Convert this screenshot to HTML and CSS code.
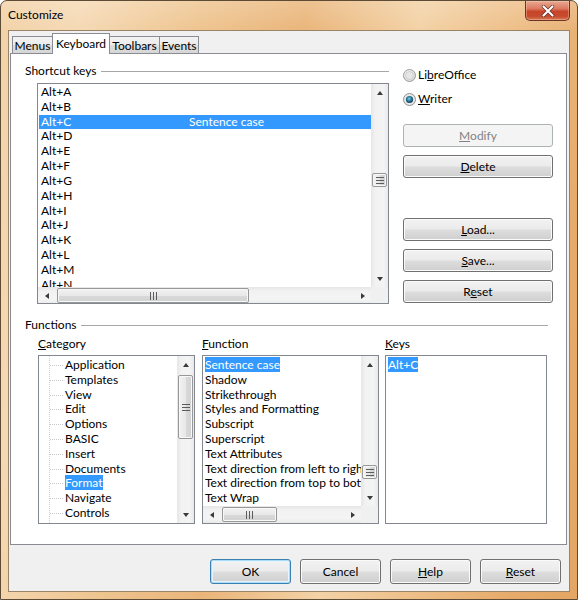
FILE: index.html
```html
<!DOCTYPE html>
<html>
<head>
<meta charset="utf-8">
<title>Customize</title>
<link rel="stylesheet" href="styles.css">
</head>
<body>
<div class="window">
  <div class="titlebar">
    <span class="title">Customize</span>
    <div class="close-btn">
      <svg width="14" height="12" viewBox="0 0 14 12"><path d="M2.5 1.5 L11.5 10.5 M11.5 1.5 L2.5 10.5" stroke="#5a2a20" stroke-width="3.4" stroke-linecap="round"/><path d="M2.5 1.5 L11.5 10.5 M11.5 1.5 L2.5 10.5" stroke="#fff" stroke-width="2.2" stroke-linecap="round"/></svg>
    </div>
  </div>
  <div class="client">
    <div class="tabs">
      <div class="tab tab-menus">Menus</div>
      <div class="tab tab-keyboard active">Keyboard</div>
      <div class="tab tab-toolbars">Toolbars</div>
      <div class="tab tab-events">Events</div>
    </div>
    <div class="panel">
      <div class="top-section">
        <div class="shortcut-col">
          <div class="group-title short"><span>Shortcut keys</span><div class="rule"></div></div>
          <div class="listbox shortcuts">
            <div class="rows">
              <div class="row"><span class="key">Alt+A</span></div>
              <div class="row"><span class="key">Alt+B</span></div>
              <div class="row selected"><span class="key">Alt+C</span><span class="cmd">Sentence case</span></div>
              <div class="row"><span class="key">Alt+D</span></div>
              <div class="row"><span class="key">Alt+E</span></div>
              <div class="row"><span class="key">Alt+F</span></div>
              <div class="row"><span class="key">Alt+G</span></div>
              <div class="row"><span class="key">Alt+H</span></div>
              <div class="row"><span class="key">Alt+I</span></div>
              <div class="row"><span class="key">Alt+J</span></div>
              <div class="row"><span class="key">Alt+K</span></div>
              <div class="row"><span class="key">Alt+L</span></div>
              <div class="row"><span class="key">Alt+M</span></div>
              <div class="row"><span class="key">Alt+N</span></div>
            </div>
            <div class="vscroll">
              <div class="arrow-box"><span class="tri up"></span></div>
              <div class="track v"><div class="thumb v thumb-short"><svg width="8" height="7" viewBox="0 0 8 7"><path d="M0 0.5H8M0 3.5H8M0 6.5H8" stroke="#5c5c5c" stroke-width="1"/></svg></div></div>
              <div class="arrow-box"><span class="tri down"></span></div>
            </div>
            <div class="hscroll">
              <div class="arrow-box"><span class="tri left"></span></div>
              <div class="track h"><div class="thumb h hthumb-short"><svg width="7" height="8" viewBox="0 0 7 8"><path d="M0.5 0V8M3.5 0V8M6.5 0V8" stroke="#5c5c5c" stroke-width="1"/></svg></div></div>
              <div class="arrow-box"><span class="tri right"></span></div>
            </div>
            <div class="corner"></div>
          </div>
        </div>
        <div class="side-col">
          <div class="radio-row first">
            <svg class="radio" width="13" height="13" viewBox="0 0 13 13"><defs><radialGradient id="rg1" cx="0.4" cy="0.35" r="0.7"><stop offset="0" stop-color="#ffffff"/><stop offset="1" stop-color="#d8d8d8"/></radialGradient></defs><circle cx="6.5" cy="6.5" r="6" fill="url(#rg1)" stroke="#9a9a9a"/><circle cx="6.5" cy="6.5" r="4" fill="#e6e6e6" stroke="#c4c4c4" stroke-width="0.8"/></svg>
            <span>Li<u>b</u>reOffice</span>
          </div>
          <div class="radio-row second">
            <svg class="radio" width="13" height="13" viewBox="0 0 13 13"><defs><radialGradient id="rg2" cx="0.45" cy="0.4" r="0.6"><stop offset="0" stop-color="#7fd0ea"/><stop offset="0.6" stop-color="#1f6c8c"/><stop offset="1" stop-color="#153f55"/></radialGradient></defs><circle cx="6.5" cy="6.5" r="6" fill="#e8e8e8" stroke="#8e8f8f"/><circle cx="6.5" cy="6.5" r="3.6" fill="url(#rg2)"/></svg>
            <span><u>W</u>riter</span>
          </div>
          <div class="btn side disabled modify"><span><u>M</u>odify</span></div>
          <div class="btn side delete"><span><u>D</u>elete</span></div>
          <div class="btn side load"><span><u>L</u>oad...</span></div>
          <div class="btn side save"><span><u>S</u>ave...</span></div>
          <div class="btn side reset"><span>R<u>e</u>set</span></div>
        </div>
      </div>

      <div class="functions">
        <div class="group-title func"><span>Functions</span><div class="rule"></div></div>
        <div class="func-grid">
          <div class="col col-cat">
            <div class="col-label"><u>C</u>ategory</div>
            <div class="listbox category">
              <div class="rows tree">
                <div class="trow">Application</div>
                <div class="trow">Templates</div>
                <div class="trow">View</div>
                <div class="trow">Edit</div>
                <div class="trow">Options</div>
                <div class="trow">BASIC</div>
                <div class="trow">Insert</div>
                <div class="trow">Documents</div>
                <div class="trow"><span class="sel">Format</span></div>
                <div class="trow">Navigate</div>
                <div class="trow">Controls</div>
              </div>
              <div class="vscroll">
                <div class="arrow-box"><span class="tri up"></span></div>
                <div class="track v"><div class="thumb v thumb-cat"><svg width="8" height="7" viewBox="0 0 8 7"><path d="M0 0.5H8M0 3.5H8M0 6.5H8" stroke="#5c5c5c" stroke-width="1"/></svg></div></div>
                <div class="arrow-box"><span class="tri down"></span></div>
              </div>
            </div>
          </div>
          <div class="col col-func">
            <div class="col-label"><u>F</u>unction</div>
            <div class="listbox function">
              <div class="rows flist">
                <div class="frow"><span class="sel">Sentence case</span></div>
                <div class="frow">Shadow</div>
                <div class="frow">Strikethrough</div>
                <div class="frow">Styles and Formatting</div>
                <div class="frow">Subscript</div>
                <div class="frow">Superscript</div>
                <div class="frow">Text Attributes</div>
                <div class="frow">Text direction from left to right</div>
                <div class="frow">Text direction from top to bottom</div>
                <div class="frow">Text Wrap</div>
              </div>
              <div class="vscroll">
                <div class="arrow-box"><span class="tri up"></span></div>
                <div class="track v"><div class="thumb v thumb-func"><svg width="8" height="7" viewBox="0 0 8 7"><path d="M0 0.5H8M0 3.5H8M0 6.5H8" stroke="#5c5c5c" stroke-width="1"/></svg></div></div>
                <div class="arrow-box"><span class="tri down"></span></div>
              </div>
              <div class="hscroll">
                <div class="arrow-box"><span class="tri left"></span></div>
                <div class="track h"><div class="thumb h hthumb-func"><svg width="7" height="8" viewBox="0 0 7 8"><path d="M0.5 0V8M3.5 0V8M6.5 0V8" stroke="#5c5c5c" stroke-width="1"/></svg></div></div>
                <div class="arrow-box"><span class="tri right"></span></div>
              </div>
              <div class="corner"></div>
            </div>
          </div>
          <div class="col col-keys">
            <div class="col-label"><u>K</u>eys</div>
            <div class="listbox keys">
              <div class="rows klist">
                <div class="frow"><span class="sel">Alt+C</span></div>
              </div>
            </div>
          </div>
        </div>
      </div>
    </div>
    <div class="dialog-buttons">
      <div class="btn dlg default"><span>OK</span></div>
      <div class="btn dlg"><span>Cancel</span></div>
      <div class="btn dlg"><span><u>H</u>elp</span></div>
      <div class="btn dlg"><span><u>R</u>eset</span></div>
    </div>
  </div>
</div>
</body>
</html>
```

FILE: styles.css
```css
* { box-sizing: border-box; }
html, body { margin: 0; padding: 0; }
body {
  width: 578px;
  height: 600px;
  overflow: hidden;
  background: #ffffff;
  font-family: Lato, "Open Sans", sans-serif;
  font-size: 12px;
  color: #000;
}
u { text-decoration: underline; text-underline-offset: 1px; }

.window {
  width: 578px;
  height: 600px;
  display: flex;
  flex-direction: column;
  padding: 0 7px 7px 7px;
  border: 1px solid #5e4b36;
  border-radius: 7px 7px 0 0;
  background:
    linear-gradient(180deg, rgba(255,255,255,0.18) 0px, rgba(255,255,255,0) 30px),
    linear-gradient(100deg, #f2d2a8 0%, #f5d9b4 12%, #eec48f 30%, #eab57a 45%, #f3d2a6 62%, #eec08a 75%, #e6ab6b 90%, #e3a664 100%);
}

.titlebar {
  height: 29px;
  display: flex;
  justify-content: space-between;
  align-items: flex-start;
}
.title {
  margin-top: 6px;
  line-height: 16px;
  color: #000;
}
.close-btn {
  width: 45px;
  height: 20px;
  display: flex;
  align-items: center;
  justify-content: center;
  border: 1px solid #6b3426;
  border-top: none;
  border-radius: 0 0 5px 5px;
  background: linear-gradient(180deg, #e9a995 0%, #dc7a60 40%, #c8452b 55%, #c64a2e 80%, #d77a55 100%);
  box-shadow: inset 0 0 0 1px rgba(255,220,200,0.35);
}

.client {
  flex: 1;
  display: flex;
  flex-direction: column;
  border: 1px solid #9a8468;
  background: #f0f0f0;
  padding: 1px 2px 0 1px;
}

/* tabs */
.tabs {
  height: 21px;
  display: flex;
  align-items: flex-end;
  padding-left: 2px;
}
.tab {
  height: 17px;
  display: flex;
  align-items: center;
  justify-content: center;
  border: 1px solid #898c95;
  border-bottom: none;
  border-right: none;
  background: linear-gradient(180deg, #f3f3f3 0%, #ebebeb 50%, #dedede 50%, #d6d6d6 100%);
  line-height: 15px;
  white-space: nowrap;
}
.tab-events { border-right: 1px solid #898c95; }
.tab-menus { width: 40px; }
.tab-keyboard { width: 58px; }
.tab-toolbars { width: 49px; }
.tab-events { width: 40px; }
.tab.active {
  height: 21px;
  margin-bottom: -1px;
  position: relative;
  z-index: 2;
  background: #ffffff;
  border-right: 1px solid #898c95;
  align-items: flex-start;
  padding-top: 2px;
}
.tab.active + .tab { border-left: none; }

.panel {
  height: 492px;
  border: 1px solid #898c95;
  background: #ffffff;
  padding: 9px 0 0 14px;
  display: flex;
  flex-direction: column;
}

.top-section {
  display: flex;
  height: 241px;
}
.shortcut-col {
  width: 364px;
  display: flex;
  flex-direction: column;
}
.group-title {
  height: 16px;
  display: flex;
  align-items: center;
  line-height: 16px;
}
.group-title .rule {
  flex: 1;
  height: 1px;
  background: #a7a7a7;
  margin-left: 4px;
}
.group-title.func { width: 523px; margin-top: 13px; }

.listbox {
  border: 1px solid #828790;
  background: #ffffff;
  display: grid;
  overflow: hidden;
}
.listbox.shortcuts {
  width: 352px;
  height: 222px;
  margin: 4px 0 0 12px;
  grid-template-columns: 333px 17px;
  grid-template-rows: 203px 17px;
}
.rows {
  overflow: hidden;
  white-space: nowrap;
}
.shortcuts .rows { padding: 1px 0 0 1px; }
.row {
  height: 14.83px;
  line-height: 14.83px;
  display: flex;
  padding-left: 2px;
}
.row .key { width: 148px; }
.row.selected { background: #3399ff; color: #ffffff; }

/* scrollbars */
.vscroll {
  display: flex;
  flex-direction: column;
  background: linear-gradient(90deg, #e6e6e6 0%, #f2f2f2 25%, #f4f4f4 75%, #e9e9e9 100%);
}
.hscroll {
  display: flex;
  background: linear-gradient(180deg, #e6e6e6 0%, #f2f2f2 25%, #f4f4f4 75%, #e9e9e9 100%);
}
.arrow-box {
  width: 17px;
  height: 17px;
  flex: none;
  display: flex;
  align-items: center;
  justify-content: center;
}
.track { flex: 1; display: flex; }
.track.v { flex-direction: column; }
.corner { background: #f0f0f0; }
.tri { width: 0; height: 0; display: block; }
.tri.up { border-left: 3.5px solid transparent; border-right: 3.5px solid transparent; border-bottom: 4px solid #3a3a3a; }
.tri.down { border-left: 3.5px solid transparent; border-right: 3.5px solid transparent; border-top: 4px solid #3a3a3a; }
.tri.left { border-top: 3.5px solid transparent; border-bottom: 3.5px solid transparent; border-right: 4px solid #3a3a3a; }
.tri.right { border-top: 3.5px solid transparent; border-bottom: 3.5px solid transparent; border-left: 4px solid #3a3a3a; }

.thumb {
  border: 1px solid #979797;
  border-radius: 2px;
  display: flex;
  align-items: center;
  justify-content: center;
  box-shadow: inset 0 0 0 1px #f8f8f8;
}
.thumb.v {
  width: 15px;
  margin-left: 1px;
  background: linear-gradient(90deg, #f2f2f2 0%, #e8e8e8 50%, #d9d9d9 51%, #d2d2d2 100%);
}
.thumb.h {
  height: 15px;
  margin-top: 1px;
  background: linear-gradient(180deg, #f2f2f2 0%, #e8e8e8 50%, #d9d9d9 51%, #d2d2d2 100%);
}
.thumb-short { height: 14px; margin-top: 72px; }
.hthumb-short { width: 192px; margin-left: 2px; }
.thumb-cat { height: 64px; margin-top: 2px; }
.thumb-func { height: 14px; margin-top: 92px; }
.hthumb-func { width: 55px; margin-left: 2px; }

/* right column */
.side-col {
  width: 150px;
  margin-left: 14px;
  display: flex;
  flex-direction: column;
}
.radio-row {
  height: 16px;
  display: flex;
  align-items: center;
  line-height: 16px;
}
.radio-row.first { margin-top: 4px; }
.radio-row.second { margin-top: 8px; }
.radio { margin-right: 2px; flex: none; }

.btn {
  display: flex;
  align-items: center;
  justify-content: center;
  border: 1px solid #707070;
  border-radius: 3px;
  background: linear-gradient(180deg, #f2f2f2 0%, #ebebeb 48%, #dddddd 52%, #cfcfcf 100%);
  box-shadow: inset 0 0 0 1px #fbfbfb;
  line-height: 16px;
}
.btn.side { width: 150px; height: 23px; margin-top: 8px; }
.btn.side.modify { margin-top: 17px; }
.btn.side.load { margin-top: 40px; }
.btn.disabled {
  border-color: #adb2b5;
  background: #f4f4f4;
  color: #838383;
  box-shadow: none;
}

/* functions */
.func-grid {
  display: flex;
  margin-left: 13px;
}
.col { display: flex; flex-direction: column; }
.col-label {
  height: 16px;
  line-height: 16px;
  margin-top: 3px;
}
.col-cat { width: 157px; }
.col-func { width: 177px; margin-left: 7px; }
.col-keys { width: 162px; margin-left: 6px; }
.col .listbox { margin-top: 3px; height: 169px; }

.listbox.category {
  grid-template-columns: 138px 17px;
  grid-template-rows: 167px;
}
.tree {
  position: relative;
  padding-top: 2px;
}
.tree::before {
  content: "";
  position: absolute;
  left: 10px;
  top: 0;
  bottom: 0;
  border-left: 1px dotted #d0d0d0;
}
.trow {
  height: 14.8px;
  line-height: 14.8px;
  padding-left: 26px;
  position: relative;
}
.trow::before {
  content: "";
  position: absolute;
  left: 11px;
  width: 13px;
  top: 7px;
  border-top: 1px dotted #c8c8c8;
}
.sel { background: #3399ff; color: #ffffff; }

.listbox.function {
  grid-template-columns: 158px 17px;
  grid-template-rows: 150px 17px;
}
.flist { padding: 2px 0 0 2px; }
.frow { height: 14.8px; line-height: 14.8px; }
.klist { padding: 2px 0 0 2px; }

/* dialog buttons */
.dialog-buttons {
  display: flex;
  justify-content: flex-end;
  gap: 9px;
  margin-top: 14px;
  padding-right: 6px;
}
.btn.dlg { width: 81px; height: 25px; }
.btn.default {
  border-color: #3c7fb1;
  box-shadow: inset 0 0 0 1px #a9dcf6, inset 0 0 0 2px #e6f5fd;
}
```
